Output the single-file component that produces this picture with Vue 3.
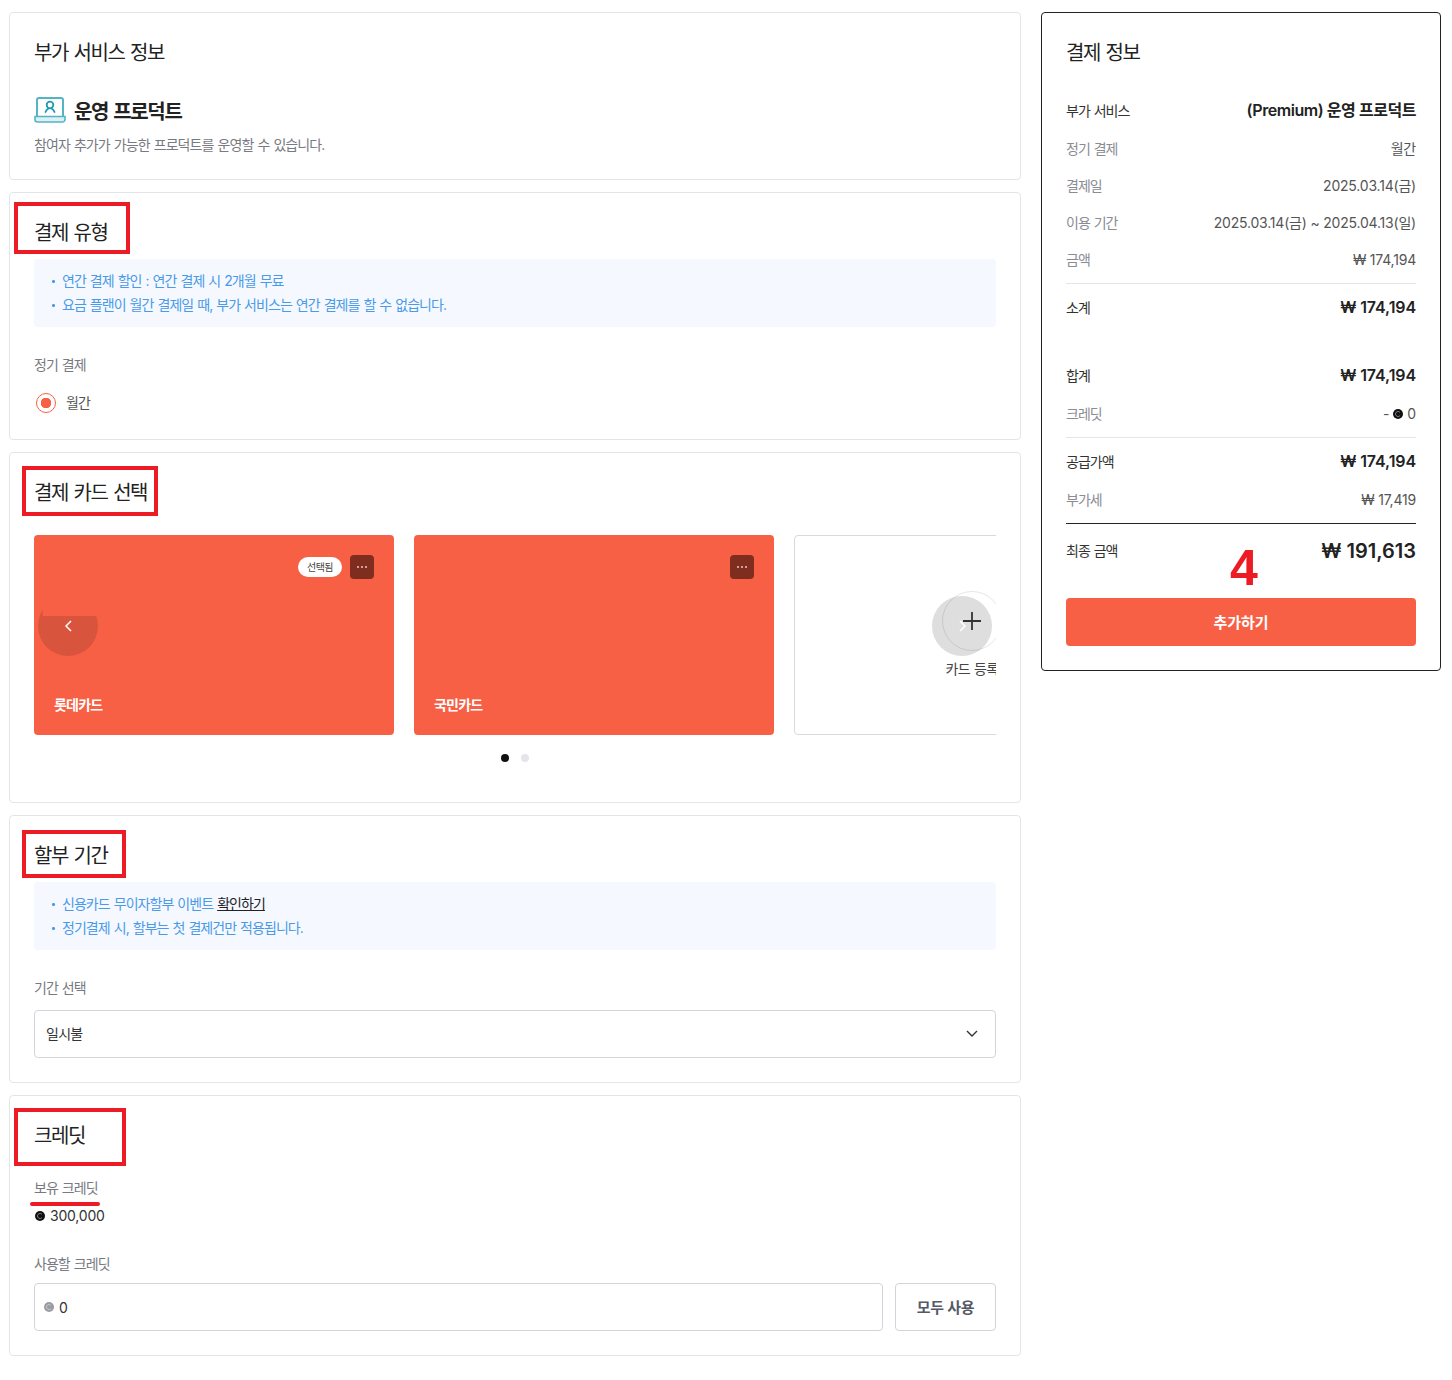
<script setup>
const payRows = [
  { label: '정기 결제', value: '월간' },
  { label: '결제일', value: '2025.03.14(금)' },
  { label: '이용 기간', value: '2025.03.14(금) ~ 2025.04.13(일)' },
  { label: '금액', value: '₩ 174,194' },
]
const cards = [
  { name: '롯데카드', selected: true },
  { name: '국민카드', selected: false },
]
</script>

<template>
  <div class="page">
    <main class="left">
      <section class="box">
        <h2 class="title">부가 서비스 정보</h2>
        <div class="product">
          <svg class="product-icon" width="32" height="26" viewBox="0 0 32 26" fill="none">
            <path d="M3 19V3a2 2 0 0 1 2-2h22a2 2 0 0 1 2 2v16" stroke="#55b4c4" stroke-width="2" fill="#fff" />
            <path d="M1 19.500h30v3a2.500 2.500 0 0 1-2.500 2.500h-25a2.500 2.500 0 0 1-2.500-2.500z" fill="#dcf0f3" stroke="#55b4c4" stroke-width="1.600" />
            <circle cx="16" cy="8" r="3.300" stroke="#1f9bb0" stroke-width="1.800" />
            <path d="M11.500 15c.7-2 2-3 3-3.500M20.500 15c-.7-2-2-3-3-3.500" stroke="#1f9bb0" stroke-width="1.800" stroke-linecap="round" />
          </svg>
          <strong>운영 프로덕트</strong>
        </div>
        <p class="desc">참여자 추가가 가능한 프로덕트를 운영할 수 있습니다.</p>
      </section>

      <section class="box">
        <i class="mark mark-type"></i>
        <h2 class="title">결제 유형</h2>
        <ul class="notice">
          <li>연간 결제 할인 : 연간 결제 시 2개월 무료</li>
          <li>요금 플랜이 월간 결제일 때, 부가 서비스는 연간 결제를 할 수 없습니다.</li>
        </ul>
        <div class="label label-cycle">정기 결제</div>
        <label class="radio">
          <span class="radio-dot"></span>
          <span>월간</span>
        </label>
      </section>

      <section class="box">
        <i class="mark mark-card"></i>
        <h2 class="title">결제 카드 선택</h2>
        <div class="slider">
          <div class="track">
            <div v-for="card in cards" :key="card.name" class="pay-card">
              <div class="pay-card-top">
                <span v-if="card.selected" class="badge">선택됨</span>
                <span class="kebab">
                  <svg width="10" height="2" viewBox="0 0 10 2" fill="#e9c9c2">
                    <circle cx="1" cy="1" r="1" /><circle cx="5" cy="1" r="1" /><circle cx="9" cy="1" r="1" />
                  </svg>
                </span>
              </div>
              <strong class="pay-card-name">{{ card.name }}</strong>
            </div>
            <div class="add-card">
              <svg class="plus" width="18" height="18" viewBox="0 0 18 18" stroke="#333" stroke-width="1.800">
                <path d="M9 0v18M0 9h18" />
              </svg>
              <span>카드 등록</span>
            </div>
          </div>
          <span class="nav nav-prev">
            <svg width="7" height="12" viewBox="0 0 7 12" fill="none" stroke="#fff" stroke-width="1.500"><path d="M6 1 1 6l5 5" /></svg>
          </span>
          <span class="nav nav-next">
            <svg width="7" height="12" viewBox="0 0 7 12" fill="none" stroke="#fff" stroke-width="1.500"><path d="m1 1 5 5-5 5" /></svg>
          </span>
          <span class="ring"></span>
        </div>
        <div class="dots"><i class="on"></i><i></i></div>
      </section>

      <section class="box">
        <i class="mark mark-plan"></i>
        <h2 class="title">할부 기간</h2>
        <ul class="notice">
          <li>신용카드 무이자할부 이벤트 <u>확인하기</u></li>
          <li>정기결제 시, 할부는 첫 결제건만 적용됩니다.</li>
        </ul>
        <div class="label label-plan">기간 선택</div>
        <div class="select">
          <span>일시불</span>
          <svg width="12" height="7" viewBox="0 0 12 7" fill="none" stroke="#333" stroke-width="1.400"><path d="m1 1 5 5 5-5" /></svg>
        </div>
      </section>

      <section class="box">
        <i class="mark mark-credit"></i>
        <i class="underline"></i>
        <h2 class="title">크레딧</h2>
        <div class="label label-own">보유 크레딧</div>
        <div class="own">
          <svg class="coin" width="10" height="10" viewBox="0 0 11 11">
            <circle cx="5.500" cy="5.500" r="5.500" fill="#111" />
            <path d="M7.600 3.600A2.800 2.800 0 1 0 7.600 7.400" fill="none" stroke="#888" stroke-width="1" />
          </svg>
          300,000
        </div>
        <div class="label label-use">사용할 크레딧</div>
        <div class="use">
          <div class="input">
            <svg class="coin" width="10" height="10" viewBox="0 0 11 11">
              <circle cx="5.500" cy="5.500" r="5.500" fill="#9a9ca3" />
              <path d="M7.600 3.600A2.800 2.800 0 1 0 7.600 7.400" fill="none" stroke="#c8c9ce" stroke-width="1" />
            </svg>
            <span>0</span>
          </div>
          <button class="all" type="button">모두 사용</button>
        </div>
      </section>
    </main>

    <aside class="summary">
      <h2 class="title">결제 정보</h2>
      <div class="row row-main row-first">
        <span>부가 서비스</span>
        <b class="service">(Premium) 운영 프로덕트</b>
      </div>
      <div v-for="row in payRows" :key="row.label" class="row row-sub">
        <span>{{ row.label }}</span>
        <span>{{ row.value }}</span>
      </div>
      <hr class="line" />
      <div class="row row-main">
        <span>소계</span>
        <b>₩ 174,194</b>
      </div>
      <div class="row row-main row-total">
        <span>합계</span>
        <b>₩ 174,194</b>
      </div>
      <div class="row row-sub">
        <span>크레딧</span>
        <span class="credit-val">
          -
          <svg width="10" height="10" viewBox="0 0 11 11">
            <circle cx="5.500" cy="5.500" r="5.500" fill="#111" />
            <path d="M7.600 3.600A2.800 2.800 0 1 0 7.600 7.400" fill="none" stroke="#888" stroke-width="1" />
          </svg>
          0
        </span>
      </div>
      <hr class="line" />
      <div class="row row-main">
        <span>공급가액</span>
        <b>₩ 174,194</b>
      </div>
      <div class="row row-sub row-tax">
        <span>부가세</span>
        <span>₩ 17,419</span>
      </div>
      <hr class="line line-dark" />
      <div class="row row-final">
        <span>최종 금액</span>
        <b>₩ 191,613</b>
      </div>
      <span class="step">4</span>
      <button class="submit" type="button">추가하기</button>
    </aside>
  </div>
</template>

<style scoped>
.page {
  display: flex;
  align-items: flex-start;
  gap: 20px;
  width: 1432px;
  padding: 12px 0 24px 9px;
  color: #222;
  font-family: Inter, "Noto Sans CJK KR", "Noto Sans", sans-serif;
}

.left {
  display: flex;
  flex-direction: column;
  gap: 12px;
  width: 1012px;
}

.box {
  position: relative;
  padding: 24px;
  border: 1px solid #e4e5e9;
  border-radius: 4px;
  background: #fff;
}

.title {
  margin: 0;
  padding-top: 2px;
  color: #222;
  font-size: 20px;
  font-weight: 400;
  line-height: 28px;
  letter-spacing: -1.45px;
  word-spacing: 1.500px;
}

.product {
  display: flex;
  align-items: center;
  gap: 8px;
  height: 28px;
  margin-top: 29px;
  font-size: 20px;
}

.product strong {
  font-weight: 700;
  letter-spacing: -1.3px;
  word-spacing: 1.500px;
}

.desc {
  margin: 11px 0 0;
  color: #777a82;
  font-size: 14px;
  line-height: 20px;
  letter-spacing: -0.92px;
  word-spacing: 1px;
}

.notice {
  margin: 12px 0 0;
  padding: 10px 16px;
  border-radius: 4px;
  background: #f5f9ff;
  color: #4a9ae8;
  font-size: 14px;
  line-height: 24px;
  list-style: none;
  letter-spacing: -0.95px;
  word-spacing: 1px;
}

.notice li {
  position: relative;
  padding-left: 12px;
}

.notice li::before {
  content: "";
  position: absolute;
  left: 2px;
  top: 11px;
  width: 2.500px;
  height: 2.500px;
  border-radius: 50%;
  background: #4a9ae8;
}

.notice u {
  color: #222;
}

.label {
  color: #777a82;
  font-size: 14px;
  line-height: 20px;
  letter-spacing: -0.95px;
  word-spacing: 1px;
}

.label-cycle {
  margin-top: 28px;
}

.label-plan {
  margin-top: 28px;
}

.radio {
  display: flex;
  align-items: center;
  gap: 10px;
  margin: 17px 0 1px;
  padding-left: 2px;
  color: #555;
  font-size: 14px;
  line-height: 22px;
  letter-spacing: -1px;
}

.radio-dot {
  display: block;
  box-sizing: border-box;
  width: 20px;
  height: 20px;
  border: 1px solid #f76045;
  border-radius: 50%;
  background: radial-gradient(circle, #f76045 0 5px, #fff 5.500px);
}

.slider {
  position: relative;
  isolation: isolate;
  height: 200px;
  margin-top: 28px;
  overflow: hidden;
}

.track {
  display: flex;
  gap: 20px;
}

.pay-card {
  display: flex;
  flex: none;
  flex-direction: column;
  justify-content: space-between;
  box-sizing: border-box;
  width: 360px;
  height: 200px;
  padding: 20px;
  border-radius: 4px;
  background: #f76045;
}

.pay-card-top {
  display: flex;
  align-items: center;
  justify-content: flex-end;
  gap: 8px;
}

.badge {
  display: block;
  width: 44px;
  border-radius: 10px;
  background: #fff;
  color: #444;
  font-size: 10px;
  line-height: 20px;
  text-align: center;
  letter-spacing: -0.5px;
}

.kebab {
  display: flex;
  align-items: center;
  justify-content: center;
  width: 24px;
  height: 24px;
  border-radius: 4px;
  background: #7f2d1e;
}

.pay-card-name {
  color: #fff;
  font-size: 14px;
  font-weight: 700;
  line-height: 20px;
  letter-spacing: -0.8px;
}

.add-card {
  display: flex;
  flex: none;
  flex-direction: column;
  align-items: center;
  gap: 29px;
  box-sizing: border-box;
  width: 356px;
  height: 200px;
  padding-top: 76px;
  border: 1px solid #d8d9dd;
  border-radius: 4px;
  color: #444;
  font-size: 14px;
  line-height: 20px;
  letter-spacing: -0.7px;
  word-spacing: 1px;
}

.nav {
  position: absolute;
  top: 61px;
  display: flex;
  align-items: center;
  justify-content: center;
  width: 60px;
  height: 60px;
  border-radius: 50%;
}

.nav-prev {
  left: 4px;
  background: rgba(0, 0, 0, 0.12);
  clip-path: polygon(0 0, 8% 0, 8% 33.300%, 100% 33.300%, 100% 100%, 0 100%);
}

.nav-next {
  left: 898px;
  z-index: -1;
  background: #dedede;
}

.ring {
  position: absolute;
  left: 908px;
  top: 56px;
  box-sizing: border-box;
  width: 60px;
  height: 60px;
  border: 1px solid rgba(0, 0, 0, 0.1);
  border-radius: 50%;
}

.dots {
  display: flex;
  justify-content: center;
  gap: 12px;
  box-sizing: border-box;
  height: 43px;
  padding-top: 19px;
}

.dots i {
  display: block;
  width: 8px;
  height: 8px;
  border-radius: 50%;
  background: #e4e5e9;
}

.dots .on {
  background: #111;
}

.select {
  display: flex;
  align-items: center;
  justify-content: space-between;
  box-sizing: border-box;
  height: 48px;
  margin-top: 12px;
  padding: 0 17px 2px 11px;
  border: 1px solid #d3d4d9;
  border-radius: 4px;
  color: #333;
  font-size: 14px;
  letter-spacing: -0.7px;
}

.label-own {
  margin-top: 28px;
}

.own {
  display: flex;
  align-items: center;
  gap: 5px;
  margin-top: 8px;
  padding-left: 1px;
  color: #333;
  font-size: 14px;
  line-height: 20px;
  letter-spacing: -0.2px;
}

.coin {
  flex: none;
}

.label-use {
  margin-top: 28px;
}

.use {
  display: flex;
  gap: 12px;
  margin-top: 9px;
}

.input {
  display: flex;
  flex: 1;
  align-items: center;
  gap: 5px;
  box-sizing: border-box;
  height: 48px;
  padding: 0 9px;
  border: 1px solid #d3d4d9;
  border-radius: 4px;
  color: #333;
  font-size: 14px;
}

.all {
  width: 101px;
  height: 48px;
  padding-bottom: 3px;
  border: 1px solid #d3d4d9;
  border-radius: 4px;
  background: #fff;
  color: #555a66;
  font-family: inherit;
  font-size: 15px;
  font-weight: 600;
  letter-spacing: -0.3px;
}

.summary {
  position: relative;
  box-sizing: border-box;
  width: 400px;
  height: 659px;
  padding: 24px;
  border: 1px solid #222;
  border-radius: 4px;
  background: #fff;
}

.row {
  display: flex;
  align-items: center;
  justify-content: space-between;
  font-size: 14px;
  line-height: 21px;
  letter-spacing: -1px;
  word-spacing: 1px;
}

.row + .row {
  margin-top: 16px;
}

.row-first {
  margin-top: 33px;
  margin-bottom: 17px;
}

.row-main {
  color: #333;
}

.row-main b {
  color: #222;
  font-size: 16px;
  font-weight: 600;
  letter-spacing: -0.1px;
  word-spacing: 0;
}

.row-main .service {
  letter-spacing: -0.45px;
}

.row-sub {
  color: #8a8c94;
}

.row-sub span:last-child {
  color: #555;
  letter-spacing: -0.2px;
  word-spacing: 0;
}

.credit-val {
  display: flex;
  align-items: center;
  gap: 4px;
}

.line {
  height: 1px;
  margin: 13px 0;
  border: 0;
  background: #e4e5e9;
}

.line-dark {
  margin-bottom: 15px;
  background: #222;
}

.row.row-total {
  margin-top: 47px;
  margin-bottom: 17px;
}

.row.row-tax {
  margin-top: 17px;
}

.row-final {
  color: #333;
  line-height: 24px;
}

.row-final b {
  color: #222;
  font-size: 20px;
  font-weight: 600;
  letter-spacing: 0;
  word-spacing: 0;
}

.step {
  position: absolute;
  left: 188px;
  top: 527px;
  z-index: 1;
  color: #ed1c24;
  font-family: "Liberation Sans", sans-serif;
  font-size: 50px;
  font-weight: 700;
  line-height: 56px;
}

.submit {
  display: block;
  width: 100%;
  height: 48px;
  margin-top: 35px;
  padding-bottom: 2px;
  border: 0;
  border-radius: 4px;
  background: #f76045;
  color: #fff;
  font-family: inherit;
  font-size: 15px;
  font-weight: 700;
}

.mark {
  position: absolute;
  z-index: 3;
  box-sizing: border-box;
  border: 4px solid #ed1c24;
}

.mark-type {
  left: 4px;
  top: 9px;
  width: 116px;
  height: 52px;
}

.mark-card {
  left: 12px;
  top: 13px;
  width: 136px;
  height: 50px;
}

.mark-plan {
  left: 12px;
  top: 14px;
  width: 104px;
  height: 48px;
}

.mark-credit {
  left: 4px;
  top: 12px;
  width: 112px;
  height: 58px;
}

.underline {
  position: absolute;
  left: 20px;
  top: 106px;
  width: 70px;
  height: 4px;
  border-radius: 2px;
  background: #ed1c24;
}
</style>

<style>
html,
body {
  background: #fff;
}
</style>
